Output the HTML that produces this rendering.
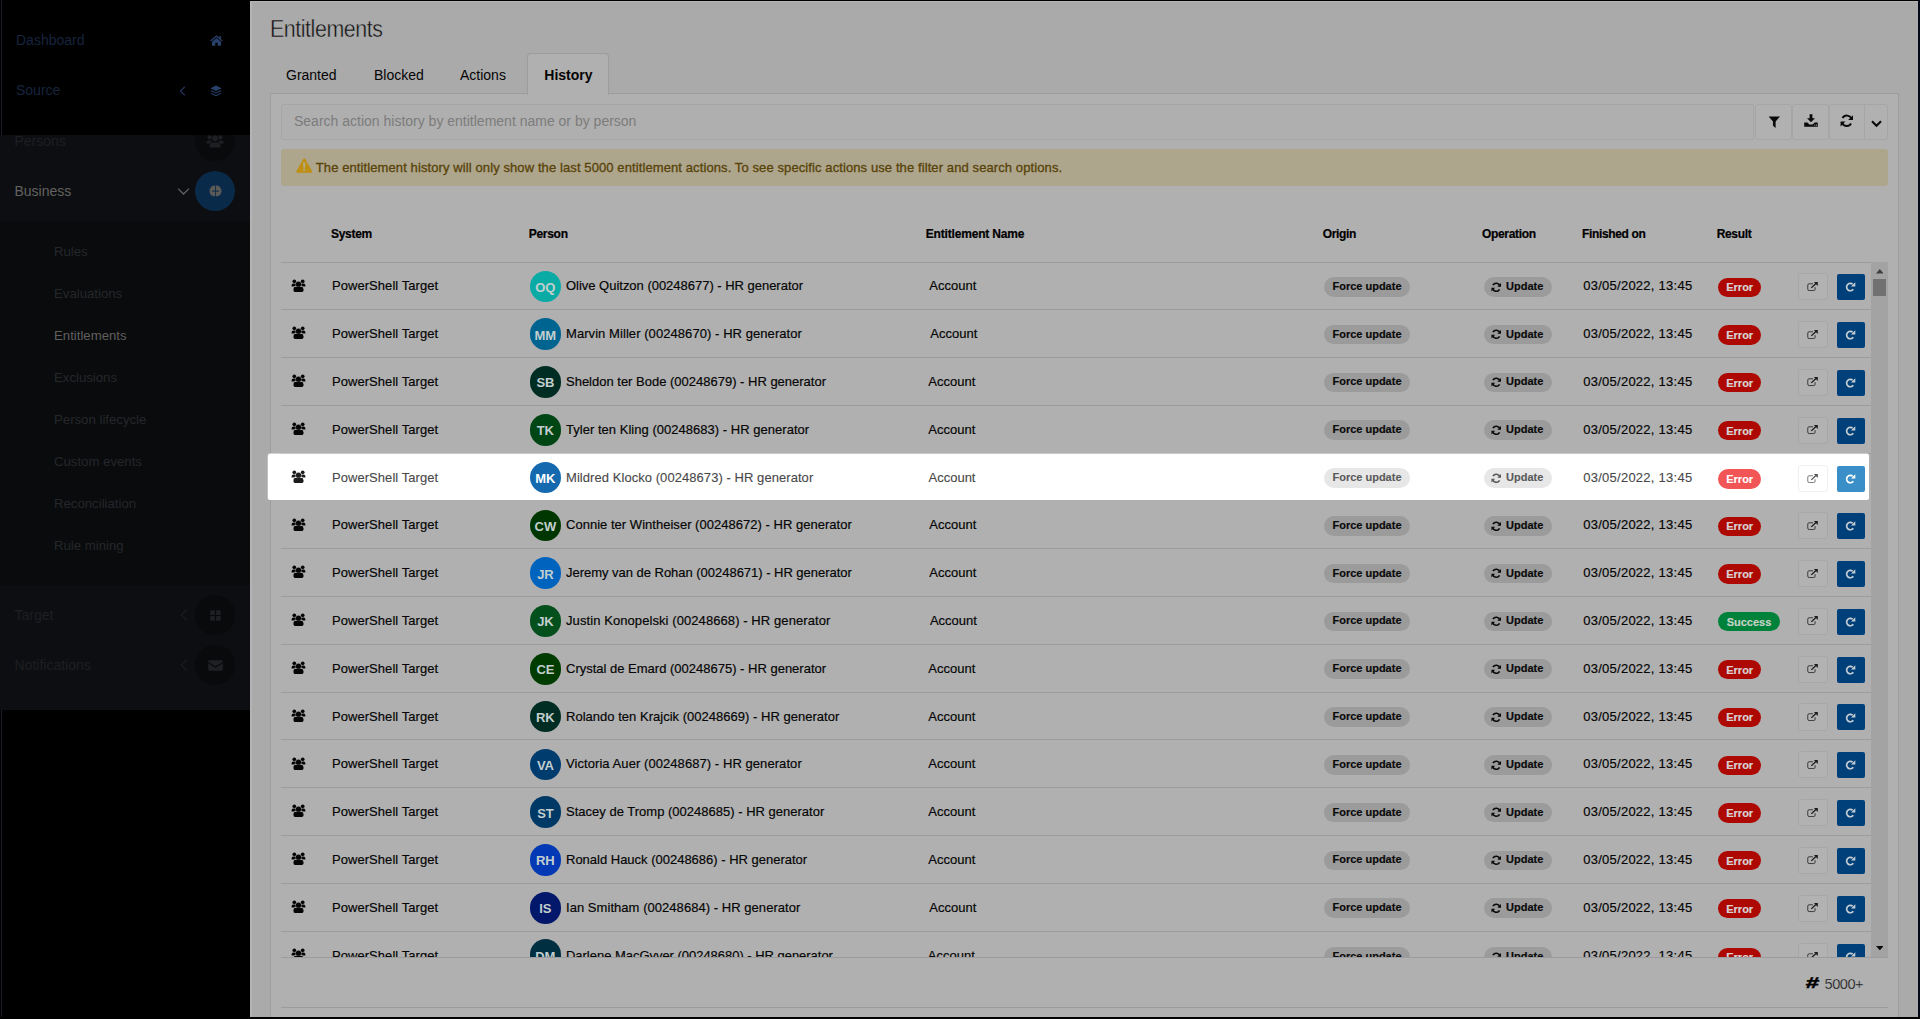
<!DOCTYPE html>
<html lang="en">
<head>
<meta charset="utf-8">
<title>Entitlements</title>
<style>
*{box-sizing:border-box;margin:0;padding:0}
html,body{width:1920px;height:1019px;overflow:hidden;background:#aaaaaa;font-family:"Liberation Sans",Arial,sans-serif;color:#050505}
body{position:relative}
svg{display:block;fill:currentColor}
.abs{position:absolute}
/* ---------- sidebar ---------- */
#side{position:absolute;left:0;top:0;width:250px;height:1019px;background:#000}
#side .blk{position:absolute;left:0;width:250px}
#side .vline{position:absolute;left:1px;width:1px;background:#1b1b2b}
.nav{position:absolute;left:0;width:250px;height:50px;font-size:14px;line-height:50px;white-space:nowrap}
.nav .t{position:absolute;top:0}
.circ{position:absolute;left:195px;width:40px;height:40px;border-radius:50%;top:5px}
.sub{position:absolute;left:54px;font-size:13.2px;line-height:16px;color:#25272b;white-space:nowrap;margin-top:.8px}
/* ---------- main ---------- */
#title{position:absolute;left:270px;top:14px;font-size:23px;line-height:30px;letter-spacing:-.47px;color:#101010;white-space:nowrap;transform:scaleX(.93);transform-origin:0 0;-webkit-text-stroke:.45px #aaaaaa}
.tab{position:absolute;top:53.6px;height:41px;font-size:14px;line-height:42px;white-space:nowrap}
#tabact{position:absolute;left:527px;top:53px;width:82px;height:42px;border:1px solid #9d9d9d;border-bottom:none;border-radius:4px 4px 0 0;background:#b0b0b0}
#panel{position:absolute;left:270px;top:93px;width:1629px;height:940px;border:1px solid #9d9d9d;background:#b0b0b0}
#search{position:absolute;left:281px;top:104px;width:1473px;height:35.5px;border:1px solid #a6a6a6;border-radius:3px 0 0 3px;background:#afafaf;font-size:14px;line-height:33px;padding-left:12px;color:#7c7c7c;white-space:nowrap}
.sbtn{position:absolute;top:104px;height:35.5px;border:1px solid #a6a6a6;border-radius:3px;background:#b1b1b1;color:#0a0a0a}
#alert{position:absolute;left:281px;top:149px;width:1607px;height:36.5px;border-radius:3px;background:#ada58c;color:#584308;font-size:13px;line-height:38px;letter-spacing:.1px;white-space:nowrap}
.th{position:absolute;top:225.7px;font-size:12px;line-height:16px;font-weight:700;color:#000;white-space:nowrap;letter-spacing:-.33px;-webkit-text-stroke:.2px #000}
#tbl{position:absolute;left:281px;top:0;width:1590px;height:957px;overflow:hidden}
.hline{position:absolute;height:1px;background:#9c9c9c}
.row{position:absolute;left:0;width:1590px;height:47.8px;border-bottom:1px solid #9c9c9c;font-size:13px;white-space:nowrap;-webkit-text-stroke:.18px currentColor}
.row>span{position:absolute;top:0;bottom:1px;display:flex;align-items:center}
.c-ico{left:10px}.i-users{width:15px;height:13.6px;margin-top:-.2px}
.c-sys{left:51px;letter-spacing:.05px}
.c-sys,.c-per,.c-ent,.c-fin{padding-top:.9px}

.av{left:248.5px;top:8px!important;bottom:auto!important;width:31.7px;height:31.7px;border-radius:50%;justify-content:center;color:#c3cfcf;font-size:13px}
.av b{font-weight:700;position:relative;top:1px;letter-spacing:-.1px;-webkit-text-stroke:0}
.c-per{left:285px}
.c-ent{left:647.5px}
.bdg{height:19.5px;top:14.5px!important;bottom:auto!important;border-radius:10px;background:#9b9b9b;font-size:11px;font-weight:700;color:#0a0a0a}
.bdg i{font-style:normal;display:block;transform:translateY(-.6px)}
.c-org{left:1043px;width:86px;justify-content:center}
.c-op{left:1202.6px;width:68.4px;padding-left:7px}
.c-op i{font-style:normal;margin-left:5px}
.i-refresh{width:10.5px;height:10.5px}
.c-fin{left:1302.2px;letter-spacing:.26px}
.res{left:1437px;height:19.4px;top:15px!important;bottom:auto!important;border-radius:10px;font-size:11px;font-weight:700;justify-content:center;color:#d9d4d4}
.b-err{width:43.4px;background:#ad0902}
.b-ok{width:62px;background:#00823a;color:#c6d2c8;letter-spacing:0}
.btn-ext{left:1517.4px;width:30px;height:27.2px;top:10.8px!important;bottom:auto!important;border:1px solid #a7a7a7;border-radius:3px;background:#b2b2b2;justify-content:center;color:#1a1a1a}
.i-ext{width:11.2px;height:9.3px;position:relative;top:-.4px;left:-1.3px}
.btn-rep{left:1556px;width:28.2px;height:26px;top:11.8px!important;bottom:auto!important;border-radius:2px;background:#00407a;justify-content:center;color:#c4cdd3}
.i-repeat{width:11px;height:10px;position:relative;top:.1px;left:-.3px}
/* highlighted row */
#hlbox{position:absolute;left:268px;top:454px;width:1601.4px;height:46px;background:#fff;border-radius:2px;box-shadow:0 -1px 0 rgba(255,255,255,.45),-1px 0 0 rgba(255,255,255,.25)}
#hlwrap{position:absolute;left:281px;top:0;width:1590px;height:600px}
.row.hl{border-bottom-color:transparent;color:#484848;-webkit-text-stroke:.1px currentColor}
.row.hl .c-ico{color:#1c1c1c}
.row.hl .av{color:#fff}
.row.hl .bdg{background:#e7e7e7;color:#5a5a5a}
.row.hl .b-err{background:#f25555;color:#fff}
.row.hl .res,.row.hl .btn-ext,.row.hl .btn-rep{margin-top:.7px}
.row.hl .btn-ext{background:#fff;border-color:#efefef;color:#555}
.row.hl .btn-rep{background:#3a8fc8;color:#fff}
.row.last .res,.row.last .btn-ext,.row.last .btn-rep,.row.last .bdg{margin-top:.9px}
.row.last .av{margin-top:-.5px}
/* scrollbar */
#sb{position:absolute;left:1871px;top:262px;width:17px;height:695px;background:#a3a3a3}
#sb .thumb{position:absolute;left:2px;top:17px;width:13px;height:17px;background:#717171}
#sb .up{position:absolute;left:5px;top:7.5px;width:0;height:0;border-left:3.6px solid transparent;border-right:3.6px solid transparent;border-bottom:4.2px solid #454545}
#sb .dn{position:absolute;left:5px;bottom:6.5px;width:0;height:0;border-left:3.6px solid transparent;border-right:3.6px solid transparent;border-top:4.2px solid #101010}
#count{position:absolute;left:1824.6px;top:973.5px;font-size:14.6px;line-height:20px;color:#111;white-space:nowrap;letter-spacing:-.5px;-webkit-text-stroke:.3px #b0b0b0}
#hash{position:absolute;left:1806.4px;top:973.4px;font-size:15.5px;line-height:20px;font-weight:700;color:#000;transform:scaleX(1.5) skewX(-4deg);transform-origin:0 50%;-webkit-text-stroke:.55px #000}
/* frame edges */
.edge{position:absolute;background:#000}
</style>
</head>
<body>
<!-- ================= SIDEBAR ================= -->
<div id="side">
  <div class="blk" style="top:135px;height:86px;background:#0d0e11"></div>
  <div class="blk" style="top:221px;height:364px;background:#0a0b0d"></div>
  <div class="blk" style="top:585px;height:125px;background:#0d0e11"></div>
  <div class="vline" style="top:0;height:135px"></div>
  <div class="vline" style="top:710px;height:309px"></div>

  <div class="nav" style="top:116px;color:#1d1f23"><span class="t" style="left:14.5px">Persons</span>
    <div class="circ" style="background:#090a0c"></div>
    <svg class="abs" style="left:206px;top:18px;width:18px;height:14px;color:#1e1f22" viewBox="0 0 18 14"><circle cx="3.6" cy="3.4" r="2.1"/><circle cx="14.4" cy="3.4" r="2.1"/><circle cx="9" cy="4.2" r="3"/><path d="M0.3 9.5V8.6Q0.3 6.4 2.5 6.4H4.6Q5.2 7.2 6 7.7Q4.4 8.3 4 9.5Z"/><path d="M17.7 9.5V8.6Q17.7 6.4 15.5 6.4H13.4Q12.8 7.2 12 7.7Q13.6 8.3 14 9.5Z"/><path d="M3.6 13.5V11.6Q3.6 8.4 6.6 8.4H11.4Q14.4 8.4 14.4 11.6V13.5Z"/></svg>
  </div>
  <div class="blk" style="top:0;height:135px;background:#000"></div>
  <div class="vline" style="top:0;height:135px"></div>
  <div class="nav" style="top:15px;color:#17243e"><span class="t" style="left:16px">Dashboard</span>
    <svg class="abs" style="left:210px;top:20px;width:13px;height:11px;color:#28406a" viewBox="0 0 13 11"><path d="M6.5 0.3L0.2 5.6L1 6.5L6.5 1.9L12 6.5L12.8 5.6L10.9 4V1H9.4V2.7Z"/><path d="M6.5 3L2 6.8V10.8H5.3V7.8H7.7V10.8H11V6.8Z"/></svg>
  </div>
  <div class="nav" style="top:65px;color:#17243e"><span class="t" style="left:16px">Source</span>
    <svg class="abs" style="left:179px;top:21px;width:7px;height:10px" viewBox="0 0 7 10"><path d="M5.8 0.8L1.4 5L5.8 9.2" fill="none" stroke="#22355a" stroke-width="1.2"/></svg>
    <svg class="abs" style="left:210px;top:20px;width:12px;height:12px;color:#28406a" viewBox="0 0 12 12"><path d="M6 0.5L0.4 3.2L6 5.9L11.6 3.2Z"/><path d="M1.6 5.3L0.4 5.9L6 8.6L11.6 5.9L10.4 5.3L6 7.4Z"/><path d="M1.6 8L0.4 8.6L6 11.3L11.6 8.6L10.4 8L6 10.1Z"/></svg>
  </div>
  <div class="nav" style="top:166px;color:#636260"><span class="t" style="left:14.5px">Business</span>
    <svg class="abs" style="left:177px;top:21px;width:13px;height:9px" viewBox="0 0 13 9"><path d="M1 1.6L6.5 7L12 1.6" fill="none" stroke="#636260" stroke-width="1.3"/></svg>
    <div class="circ" style="background:#0a2a4a"></div>
    <svg class="abs" style="left:208.5px;top:19px;width:13px;height:12px;color:#5b5a58" viewBox="0 0 13 12"><path d="M6.1 0.6Q4.6 0 3.6 1.1Q1.9 1.2 1.6 2.9Q0.2 3.9 0.7 5.6Q0 7.1 1.2 8.4Q1.3 10.3 3.2 10.6Q4.6 12 6.1 11Z"/><path d="M6.9 0.6Q8.4 0 9.4 1.1Q11.1 1.2 11.4 2.9Q12.8 3.9 12.3 5.6Q13 7.1 11.8 8.4Q11.7 10.3 9.8 10.6Q8.4 12 6.9 11Z"/><rect x="3" y="5.6" width="7" height="1" fill="#0a2a4a"/></svg>
  </div>

  <span class="sub" style="top:243px">Rules</span>
  <span class="sub" style="top:285px">Evaluations</span>
  <span class="sub" style="top:327px;color:#605f5d">Entitlements</span>
  <span class="sub" style="top:369px">Exclusions</span>
  <span class="sub" style="top:411px">Person lifecycle</span>
  <span class="sub" style="top:453px">Custom events</span>
  <span class="sub" style="top:495px">Reconciliation</span>
  <span class="sub" style="top:537px">Rule mining</span>

  <div class="nav" style="top:590px;color:#1e1f22"><span class="t" style="left:14.5px">Target</span>
    <svg class="abs" style="left:180px;top:19px;width:8px;height:12px" viewBox="0 0 8 12"><path d="M6.6 0.8L1.4 6L6.6 11.2" fill="none" stroke="#1b1c1f" stroke-width="1.2"/></svg>
    <div class="circ" style="background:#090a0c"></div>
    <svg class="abs" style="left:209.5px;top:19.5px;width:11px;height:11px;color:#1f2023" viewBox="0 0 11 11"><rect x="0.3" y="0.3" width="4.6" height="4.6" rx=".6"/><rect x="6.1" y="0.3" width="4.6" height="4.6" rx=".6"/><rect x="0.3" y="6.1" width="4.6" height="4.6" rx=".6"/><rect x="6.1" y="6.1" width="4.6" height="4.6" rx=".6"/></svg>
  </div>
  <div class="nav" style="top:640px;color:#1e1f22"><span class="t" style="left:14.5px">Notifications</span>
    <svg class="abs" style="left:180px;top:19px;width:8px;height:12px" viewBox="0 0 8 12"><path d="M6.6 0.8L1.4 6L6.6 11.2" fill="none" stroke="#1b1c1f" stroke-width="1.2"/></svg>
    <div class="circ" style="background:#090a0c"></div>
    <svg class="abs" style="left:207.5px;top:19.5px;width:15px;height:11px;color:#1f2023" viewBox="0 0 15 11"><path d="M1.4 0.2H13.6Q14.8 0.2 14.8 1.4V1.9L7.5 6.3L0.2 1.9V1.4Q0.2 0.2 1.4 0.2Z"/><path d="M0.2 3.3L7.5 7.7L14.8 3.3V9.6Q14.8 10.8 13.6 10.8H1.4Q0.2 10.8 0.2 9.6Z"/></svg>
  </div>
</div>

<!-- ================= MAIN ================= -->
<div id="title">Entitlements</div>
<div id="panel"></div>
<div id="tabact"></div>
<span class="tab" style="left:286px">Granted</span>
<span class="tab" style="left:374px">Blocked</span>
<span class="tab" style="left:460px">Actions</span>
<span class="tab" style="left:544.3px;font-weight:700">History</span>

<div id="search">Search action history by entitlement name or by person</div>
<div class="sbtn" style="left:1755px;width:37px">
  <svg class="abs" style="left:11.6px;top:10.8px;width:12.6px;height:12.2px" viewBox="0 0 12 12"><path d="M0.4 0.4H11.6L7.3 5.4V11.8L4.7 9.6V5.4Z"/></svg>
</div>
<div class="sbtn" style="left:1792px;width:37px">
  <svg class="abs" style="left:11px;top:8.8px;width:14px;height:13px" viewBox="0 0 14 13"><path d="M5.6 0.2H8.4V4.2H11L7 8.2L3 4.2H5.6Z"/><path d="M0.2 8.6H3.4L5.4 10.6H8.6L10.6 8.6H13.8V12.8H0.2Z"/><rect x="10.3" y="10.6" width="1" height="1" fill="#b1b1b1"/><rect x="12" y="10.6" width="1" height="1" fill="#b1b1b1"/></svg>
</div>
<div class="sbtn" style="left:1829px;width:58.8px">
  <svg class="abs" style="left:10.2px;top:9.2px;width:13.6px;height:13.6px" viewBox="0 0 14 14"><path d="M11.9 5.2A5.1 5.1 0 0 0 2.6 4.2" fill="none" stroke="currentColor" stroke-width="2"/><path d="M2.1 8.8A5.1 5.1 0 0 0 11.4 9.8" fill="none" stroke="currentColor" stroke-width="2"/><path d="M13.4 1.2V6.2H8.4Z"/><path d="M0.6 12.8V7.8H5.6Z"/></svg>
  <div class="abs" style="left:34.2px;top:0;width:1px;height:33.5px;background:#a6a6a6"></div>
  <svg class="abs" style="left:40.8px;top:15.2px;width:11px;height:8px" viewBox="0 0 11 8"><path d="M1 1.2L5.5 5.7L10 1.2" fill="none" stroke="currentColor" stroke-width="2.1"/></svg>
</div>

<div id="alert">
  <svg class="abs" style="left:14.8px;top:9px;width:16.5px;height:15px" viewBox="0 0 16.5 15"><path d="M8.25 0.4Q8.9 0.4 9.3 1.1L16.1 13.2Q16.6 14.6 15.2 14.7H1.3Q-0.1 14.6 0.4 13.2L7.2 1.1Q7.6 0.4 8.25 0.4Z" fill="#be8f12"/><path d="M7.05 4.6H9.45L9.1 9.8H7.4Z" fill="#b3a988"/><rect x="7.2" y="10.8" width="2.1" height="2" fill="#b3a988"/></svg>
  <span class="abs" style="left:34.8px;top:0;-webkit-text-stroke:.3px currentColor">The entitlement history will only show the last 5000 entitlement actions. To see specific actions use the filter and search options.</span>
</div>

<span class="th" style="left:331px;letter-spacing:-.28px">System</span>
<span class="th" style="left:528.7px;letter-spacing:-.28px">Person</span>
<span class="th" style="left:925.7px;letter-spacing:-.17px">Entitlement Name</span>
<span class="th" style="left:1322.7px">Origin</span>
<span class="th" style="left:1482px">Operation</span>
<span class="th" style="left:1582px;letter-spacing:-.36px">Finished on</span>
<span class="th" style="left:1716.7px">Result</span>

<div class="hline" style="left:281px;top:261.5px;width:1607px"></div>
<div id="tbl">
<div class="row" style="top:262.50px"><span class="c-ico"><svg class="i-users" viewBox="0 0 15 14"><circle cx="3.2" cy="2.3" r="1.9"/><circle cx="11.8" cy="2.3" r="1.9"/><path d="M0.4 7.6V6.4Q0.4 4.6 2.2 4.6H4.4Q4.2 5.6 4.9 6.7Q3.6 7 3.2 7.6Z"/><path d="M14.6 7.6V6.4Q14.6 4.6 12.8 4.6H10.6Q10.8 5.6 10.1 6.7Q11.4 7 11.8 7.6Z"/><circle cx="7.5" cy="5.3" r="2.7"/><path d="M2.4 11.9V10.6Q2.4 8.1 5 8.1H10Q12.6 8.1 12.6 10.6V11.9Q12.6 13.4 11 13.4H4Q2.4 13.4 2.4 11.9Z"/></svg></span><span class="c-sys">PowerShell Target</span><span class="av" style="background:#0aaaa5"><b>OQ</b></span><span class="c-per" style="letter-spacing:-0.019px">Olive Quitzon (00248677) - HR generator</span><span class="c-ent" style="left:648.3px">Account</span><span class="bdg c-org"><i>Force update</i></span><span class="bdg c-op"><svg class="i-refresh" viewBox="0 0 14 14"><path d="M11.9 5.2A5.1 5.1 0 0 0 2.6 4.2" fill="none" stroke="currentColor" stroke-width="2.2"/><path d="M2.1 8.8A5.1 5.1 0 0 0 11.4 9.8" fill="none" stroke="currentColor" stroke-width="2.2"/><path d="M13.4 1.2V6.2H8.4Z"/><path d="M0.6 12.8V7.8H5.6Z"/></svg><i>Update</i></span><span class="c-fin">03/05/2022, 13:45</span><span class="res b-err">Error</span><span class="btn-ext"><svg class="i-ext" viewBox="0 0 12 10"><path d="M6.4 1.9H2.3Q0.8 1.9 0.8 3.4V7.7Q0.8 9.2 2.3 9.2H7.2Q8.7 9.2 8.7 7.7V5.6" fill="none" stroke="currentColor" stroke-width="1.05" opacity=".8"/><path d="M4.6 6.3L9.6 1.6" fill="none" stroke="currentColor" stroke-width="1.4"/><path d="M7.4 0H11.6V4.2Z"/></svg></span><span class="btn-rep"><svg class="i-repeat" viewBox="0 0 11 10"><path d="M8.3 7.3A3.7 3.7 0 1 1 7.7 2.2" fill="none" stroke="currentColor" stroke-width="1.7"/><path d="M10.3 0.3V4.6H6Z"/></svg></span></div>
<div class="row" style="top:310.30px"><span class="c-ico"><svg class="i-users" viewBox="0 0 15 14"><circle cx="3.2" cy="2.3" r="1.9"/><circle cx="11.8" cy="2.3" r="1.9"/><path d="M0.4 7.6V6.4Q0.4 4.6 2.2 4.6H4.4Q4.2 5.6 4.9 6.7Q3.6 7 3.2 7.6Z"/><path d="M14.6 7.6V6.4Q14.6 4.6 12.8 4.6H10.6Q10.8 5.6 10.1 6.7Q11.4 7 11.8 7.6Z"/><circle cx="7.5" cy="5.3" r="2.7"/><path d="M2.4 11.9V10.6Q2.4 8.1 5 8.1H10Q12.6 8.1 12.6 10.6V11.9Q12.6 13.4 11 13.4H4Q2.4 13.4 2.4 11.9Z"/></svg></span><span class="c-sys">PowerShell Target</span><span class="av" style="background:#006491"><b>MM</b></span><span class="c-per" style="letter-spacing:0.067px">Marvin Miller (00248670) - HR generator</span><span class="c-ent" style="left:649.3px">Account</span><span class="bdg c-org"><i>Force update</i></span><span class="bdg c-op"><svg class="i-refresh" viewBox="0 0 14 14"><path d="M11.9 5.2A5.1 5.1 0 0 0 2.6 4.2" fill="none" stroke="currentColor" stroke-width="2.2"/><path d="M2.1 8.8A5.1 5.1 0 0 0 11.4 9.8" fill="none" stroke="currentColor" stroke-width="2.2"/><path d="M13.4 1.2V6.2H8.4Z"/><path d="M0.6 12.8V7.8H5.6Z"/></svg><i>Update</i></span><span class="c-fin">03/05/2022, 13:45</span><span class="res b-err">Error</span><span class="btn-ext"><svg class="i-ext" viewBox="0 0 12 10"><path d="M6.4 1.9H2.3Q0.8 1.9 0.8 3.4V7.7Q0.8 9.2 2.3 9.2H7.2Q8.7 9.2 8.7 7.7V5.6" fill="none" stroke="currentColor" stroke-width="1.05" opacity=".8"/><path d="M4.6 6.3L9.6 1.6" fill="none" stroke="currentColor" stroke-width="1.4"/><path d="M7.4 0H11.6V4.2Z"/></svg></span><span class="btn-rep"><svg class="i-repeat" viewBox="0 0 11 10"><path d="M8.3 7.3A3.7 3.7 0 1 1 7.7 2.2" fill="none" stroke="currentColor" stroke-width="1.7"/><path d="M10.3 0.3V4.6H6Z"/></svg></span></div>
<div class="row" style="top:358.10px"><span class="c-ico"><svg class="i-users" viewBox="0 0 15 14"><circle cx="3.2" cy="2.3" r="1.9"/><circle cx="11.8" cy="2.3" r="1.9"/><path d="M0.4 7.6V6.4Q0.4 4.6 2.2 4.6H4.4Q4.2 5.6 4.9 6.7Q3.6 7 3.2 7.6Z"/><path d="M14.6 7.6V6.4Q14.6 4.6 12.8 4.6H10.6Q10.8 5.6 10.1 6.7Q11.4 7 11.8 7.6Z"/><circle cx="7.5" cy="5.3" r="2.7"/><path d="M2.4 11.9V10.6Q2.4 8.1 5 8.1H10Q12.6 8.1 12.6 10.6V11.9Q12.6 13.4 11 13.4H4Q2.4 13.4 2.4 11.9Z"/></svg></span><span class="c-sys">PowerShell Target</span><span class="av" style="background:#002d23"><b>SB</b></span><span class="c-per" style="letter-spacing:-0.004px">Sheldon ter Bode (00248679) - HR generator</span><span class="c-ent" style="left:647.3px">Account</span><span class="bdg c-org"><i>Force update</i></span><span class="bdg c-op"><svg class="i-refresh" viewBox="0 0 14 14"><path d="M11.9 5.2A5.1 5.1 0 0 0 2.6 4.2" fill="none" stroke="currentColor" stroke-width="2.2"/><path d="M2.1 8.8A5.1 5.1 0 0 0 11.4 9.8" fill="none" stroke="currentColor" stroke-width="2.2"/><path d="M13.4 1.2V6.2H8.4Z"/><path d="M0.6 12.8V7.8H5.6Z"/></svg><i>Update</i></span><span class="c-fin">03/05/2022, 13:45</span><span class="res b-err">Error</span><span class="btn-ext"><svg class="i-ext" viewBox="0 0 12 10"><path d="M6.4 1.9H2.3Q0.8 1.9 0.8 3.4V7.7Q0.8 9.2 2.3 9.2H7.2Q8.7 9.2 8.7 7.7V5.6" fill="none" stroke="currentColor" stroke-width="1.05" opacity=".8"/><path d="M4.6 6.3L9.6 1.6" fill="none" stroke="currentColor" stroke-width="1.4"/><path d="M7.4 0H11.6V4.2Z"/></svg></span><span class="btn-rep"><svg class="i-repeat" viewBox="0 0 11 10"><path d="M8.3 7.3A3.7 3.7 0 1 1 7.7 2.2" fill="none" stroke="currentColor" stroke-width="1.7"/><path d="M10.3 0.3V4.6H6Z"/></svg></span></div>
<div class="row" style="top:405.90px"><span class="c-ico"><svg class="i-users" viewBox="0 0 15 14"><circle cx="3.2" cy="2.3" r="1.9"/><circle cx="11.8" cy="2.3" r="1.9"/><path d="M0.4 7.6V6.4Q0.4 4.6 2.2 4.6H4.4Q4.2 5.6 4.9 6.7Q3.6 7 3.2 7.6Z"/><path d="M14.6 7.6V6.4Q14.6 4.6 12.8 4.6H10.6Q10.8 5.6 10.1 6.7Q11.4 7 11.8 7.6Z"/><circle cx="7.5" cy="5.3" r="2.7"/><path d="M2.4 11.9V10.6Q2.4 8.1 5 8.1H10Q12.6 8.1 12.6 10.6V11.9Q12.6 13.4 11 13.4H4Q2.4 13.4 2.4 11.9Z"/></svg></span><span class="c-sys">PowerShell Target</span><span class="av" style="background:#004614"><b>TK</b></span><span class="c-per" style="letter-spacing:0.027px">Tyler ten Kling (00248683) - HR generator</span><span class="c-ent" style="left:647.3px">Account</span><span class="bdg c-org"><i>Force update</i></span><span class="bdg c-op"><svg class="i-refresh" viewBox="0 0 14 14"><path d="M11.9 5.2A5.1 5.1 0 0 0 2.6 4.2" fill="none" stroke="currentColor" stroke-width="2.2"/><path d="M2.1 8.8A5.1 5.1 0 0 0 11.4 9.8" fill="none" stroke="currentColor" stroke-width="2.2"/><path d="M13.4 1.2V6.2H8.4Z"/><path d="M0.6 12.8V7.8H5.6Z"/></svg><i>Update</i></span><span class="c-fin">03/05/2022, 13:45</span><span class="res b-err">Error</span><span class="btn-ext"><svg class="i-ext" viewBox="0 0 12 10"><path d="M6.4 1.9H2.3Q0.8 1.9 0.8 3.4V7.7Q0.8 9.2 2.3 9.2H7.2Q8.7 9.2 8.7 7.7V5.6" fill="none" stroke="currentColor" stroke-width="1.05" opacity=".8"/><path d="M4.6 6.3L9.6 1.6" fill="none" stroke="currentColor" stroke-width="1.4"/><path d="M7.4 0H11.6V4.2Z"/></svg></span><span class="btn-rep"><svg class="i-repeat" viewBox="0 0 11 10"><path d="M8.3 7.3A3.7 3.7 0 1 1 7.7 2.2" fill="none" stroke="currentColor" stroke-width="1.7"/><path d="M10.3 0.3V4.6H6Z"/></svg></span></div>
<div class="row" style="top:501.50px"><span class="c-ico"><svg class="i-users" viewBox="0 0 15 14"><circle cx="3.2" cy="2.3" r="1.9"/><circle cx="11.8" cy="2.3" r="1.9"/><path d="M0.4 7.6V6.4Q0.4 4.6 2.2 4.6H4.4Q4.2 5.6 4.9 6.7Q3.6 7 3.2 7.6Z"/><path d="M14.6 7.6V6.4Q14.6 4.6 12.8 4.6H10.6Q10.8 5.6 10.1 6.7Q11.4 7 11.8 7.6Z"/><circle cx="7.5" cy="5.3" r="2.7"/><path d="M2.4 11.9V10.6Q2.4 8.1 5 8.1H10Q12.6 8.1 12.6 10.6V11.9Q12.6 13.4 11 13.4H4Q2.4 13.4 2.4 11.9Z"/></svg></span><span class="c-sys">PowerShell Target</span><span class="av" style="background:#003700"><b>CW</b></span><span class="c-per" style="letter-spacing:0.023px">Connie ter Wintheiser (00248672) - HR generator</span><span class="c-ent" style="left:648.3px">Account</span><span class="bdg c-org"><i>Force update</i></span><span class="bdg c-op"><svg class="i-refresh" viewBox="0 0 14 14"><path d="M11.9 5.2A5.1 5.1 0 0 0 2.6 4.2" fill="none" stroke="currentColor" stroke-width="2.2"/><path d="M2.1 8.8A5.1 5.1 0 0 0 11.4 9.8" fill="none" stroke="currentColor" stroke-width="2.2"/><path d="M13.4 1.2V6.2H8.4Z"/><path d="M0.6 12.8V7.8H5.6Z"/></svg><i>Update</i></span><span class="c-fin">03/05/2022, 13:45</span><span class="res b-err">Error</span><span class="btn-ext"><svg class="i-ext" viewBox="0 0 12 10"><path d="M6.4 1.9H2.3Q0.8 1.9 0.8 3.4V7.7Q0.8 9.2 2.3 9.2H7.2Q8.7 9.2 8.7 7.7V5.6" fill="none" stroke="currentColor" stroke-width="1.05" opacity=".8"/><path d="M4.6 6.3L9.6 1.6" fill="none" stroke="currentColor" stroke-width="1.4"/><path d="M7.4 0H11.6V4.2Z"/></svg></span><span class="btn-rep"><svg class="i-repeat" viewBox="0 0 11 10"><path d="M8.3 7.3A3.7 3.7 0 1 1 7.7 2.2" fill="none" stroke="currentColor" stroke-width="1.7"/><path d="M10.3 0.3V4.6H6Z"/></svg></span></div>
<div class="row" style="top:549.30px"><span class="c-ico"><svg class="i-users" viewBox="0 0 15 14"><circle cx="3.2" cy="2.3" r="1.9"/><circle cx="11.8" cy="2.3" r="1.9"/><path d="M0.4 7.6V6.4Q0.4 4.6 2.2 4.6H4.4Q4.2 5.6 4.9 6.7Q3.6 7 3.2 7.6Z"/><path d="M14.6 7.6V6.4Q14.6 4.6 12.8 4.6H10.6Q10.8 5.6 10.1 6.7Q11.4 7 11.8 7.6Z"/><circle cx="7.5" cy="5.3" r="2.7"/><path d="M2.4 11.9V10.6Q2.4 8.1 5 8.1H10Q12.6 8.1 12.6 10.6V11.9Q12.6 13.4 11 13.4H4Q2.4 13.4 2.4 11.9Z"/></svg></span><span class="c-sys">PowerShell Target</span><span class="av" style="background:#0064be"><b>JR</b></span><span class="c-per" style="letter-spacing:-0.024px">Jeremy van de Rohan (00248671) - HR generator</span><span class="c-ent" style="left:648.3px">Account</span><span class="bdg c-org"><i>Force update</i></span><span class="bdg c-op"><svg class="i-refresh" viewBox="0 0 14 14"><path d="M11.9 5.2A5.1 5.1 0 0 0 2.6 4.2" fill="none" stroke="currentColor" stroke-width="2.2"/><path d="M2.1 8.8A5.1 5.1 0 0 0 11.4 9.8" fill="none" stroke="currentColor" stroke-width="2.2"/><path d="M13.4 1.2V6.2H8.4Z"/><path d="M0.6 12.8V7.8H5.6Z"/></svg><i>Update</i></span><span class="c-fin">03/05/2022, 13:45</span><span class="res b-err">Error</span><span class="btn-ext"><svg class="i-ext" viewBox="0 0 12 10"><path d="M6.4 1.9H2.3Q0.8 1.9 0.8 3.4V7.7Q0.8 9.2 2.3 9.2H7.2Q8.7 9.2 8.7 7.7V5.6" fill="none" stroke="currentColor" stroke-width="1.05" opacity=".8"/><path d="M4.6 6.3L9.6 1.6" fill="none" stroke="currentColor" stroke-width="1.4"/><path d="M7.4 0H11.6V4.2Z"/></svg></span><span class="btn-rep"><svg class="i-repeat" viewBox="0 0 11 10"><path d="M8.3 7.3A3.7 3.7 0 1 1 7.7 2.2" fill="none" stroke="currentColor" stroke-width="1.7"/><path d="M10.3 0.3V4.6H6Z"/></svg></span></div>
<div class="row" style="top:597.10px"><span class="c-ico"><svg class="i-users" viewBox="0 0 15 14"><circle cx="3.2" cy="2.3" r="1.9"/><circle cx="11.8" cy="2.3" r="1.9"/><path d="M0.4 7.6V6.4Q0.4 4.6 2.2 4.6H4.4Q4.2 5.6 4.9 6.7Q3.6 7 3.2 7.6Z"/><path d="M14.6 7.6V6.4Q14.6 4.6 12.8 4.6H10.6Q10.8 5.6 10.1 6.7Q11.4 7 11.8 7.6Z"/><circle cx="7.5" cy="5.3" r="2.7"/><path d="M2.4 11.9V10.6Q2.4 8.1 5 8.1H10Q12.6 8.1 12.6 10.6V11.9Q12.6 13.4 11 13.4H4Q2.4 13.4 2.4 11.9Z"/></svg></span><span class="c-sys">PowerShell Target</span><span class="av" style="background:#04501c"><b>JK</b></span><span class="c-per" style="letter-spacing:0.082px">Justin Konopelski (00248668) - HR generator</span><span class="c-ent" style="left:648.9px">Account</span><span class="bdg c-org"><i>Force update</i></span><span class="bdg c-op"><svg class="i-refresh" viewBox="0 0 14 14"><path d="M11.9 5.2A5.1 5.1 0 0 0 2.6 4.2" fill="none" stroke="currentColor" stroke-width="2.2"/><path d="M2.1 8.8A5.1 5.1 0 0 0 11.4 9.8" fill="none" stroke="currentColor" stroke-width="2.2"/><path d="M13.4 1.2V6.2H8.4Z"/><path d="M0.6 12.8V7.8H5.6Z"/></svg><i>Update</i></span><span class="c-fin">03/05/2022, 13:45</span><span class="res b-ok">Success</span><span class="btn-ext"><svg class="i-ext" viewBox="0 0 12 10"><path d="M6.4 1.9H2.3Q0.8 1.9 0.8 3.4V7.7Q0.8 9.2 2.3 9.2H7.2Q8.7 9.2 8.7 7.7V5.6" fill="none" stroke="currentColor" stroke-width="1.05" opacity=".8"/><path d="M4.6 6.3L9.6 1.6" fill="none" stroke="currentColor" stroke-width="1.4"/><path d="M7.4 0H11.6V4.2Z"/></svg></span><span class="btn-rep"><svg class="i-repeat" viewBox="0 0 11 10"><path d="M8.3 7.3A3.7 3.7 0 1 1 7.7 2.2" fill="none" stroke="currentColor" stroke-width="1.7"/><path d="M10.3 0.3V4.6H6Z"/></svg></span></div>
<div class="row" style="top:644.90px"><span class="c-ico"><svg class="i-users" viewBox="0 0 15 14"><circle cx="3.2" cy="2.3" r="1.9"/><circle cx="11.8" cy="2.3" r="1.9"/><path d="M0.4 7.6V6.4Q0.4 4.6 2.2 4.6H4.4Q4.2 5.6 4.9 6.7Q3.6 7 3.2 7.6Z"/><path d="M14.6 7.6V6.4Q14.6 4.6 12.8 4.6H10.6Q10.8 5.6 10.1 6.7Q11.4 7 11.8 7.6Z"/><circle cx="7.5" cy="5.3" r="2.7"/><path d="M2.4 11.9V10.6Q2.4 8.1 5 8.1H10Q12.6 8.1 12.6 10.6V11.9Q12.6 13.4 11 13.4H4Q2.4 13.4 2.4 11.9Z"/></svg></span><span class="c-sys">PowerShell Target</span><span class="av" style="background:#003c00"><b>CE</b></span><span class="c-per" style="letter-spacing:-0.001px">Crystal de Emard (00248675) - HR generator</span><span class="c-ent" style="left:647.3px">Account</span><span class="bdg c-org"><i>Force update</i></span><span class="bdg c-op"><svg class="i-refresh" viewBox="0 0 14 14"><path d="M11.9 5.2A5.1 5.1 0 0 0 2.6 4.2" fill="none" stroke="currentColor" stroke-width="2.2"/><path d="M2.1 8.8A5.1 5.1 0 0 0 11.4 9.8" fill="none" stroke="currentColor" stroke-width="2.2"/><path d="M13.4 1.2V6.2H8.4Z"/><path d="M0.6 12.8V7.8H5.6Z"/></svg><i>Update</i></span><span class="c-fin">03/05/2022, 13:45</span><span class="res b-err">Error</span><span class="btn-ext"><svg class="i-ext" viewBox="0 0 12 10"><path d="M6.4 1.9H2.3Q0.8 1.9 0.8 3.4V7.7Q0.8 9.2 2.3 9.2H7.2Q8.7 9.2 8.7 7.7V5.6" fill="none" stroke="currentColor" stroke-width="1.05" opacity=".8"/><path d="M4.6 6.3L9.6 1.6" fill="none" stroke="currentColor" stroke-width="1.4"/><path d="M7.4 0H11.6V4.2Z"/></svg></span><span class="btn-rep"><svg class="i-repeat" viewBox="0 0 11 10"><path d="M8.3 7.3A3.7 3.7 0 1 1 7.7 2.2" fill="none" stroke="currentColor" stroke-width="1.7"/><path d="M10.3 0.3V4.6H6Z"/></svg></span></div>
<div class="row" style="top:692.70px"><span class="c-ico"><svg class="i-users" viewBox="0 0 15 14"><circle cx="3.2" cy="2.3" r="1.9"/><circle cx="11.8" cy="2.3" r="1.9"/><path d="M0.4 7.6V6.4Q0.4 4.6 2.2 4.6H4.4Q4.2 5.6 4.9 6.7Q3.6 7 3.2 7.6Z"/><path d="M14.6 7.6V6.4Q14.6 4.6 12.8 4.6H10.6Q10.8 5.6 10.1 6.7Q11.4 7 11.8 7.6Z"/><circle cx="7.5" cy="5.3" r="2.7"/><path d="M2.4 11.9V10.6Q2.4 8.1 5 8.1H10Q12.6 8.1 12.6 10.6V11.9Q12.6 13.4 11 13.4H4Q2.4 13.4 2.4 11.9Z"/></svg></span><span class="c-sys">PowerShell Target</span><span class="av" style="background:#002d23"><b>RK</b></span><span class="c-per" style="letter-spacing:0.019px">Rolando ten Krajcik (00248669) - HR generator</span><span class="c-ent" style="left:647.3px">Account</span><span class="bdg c-org"><i>Force update</i></span><span class="bdg c-op"><svg class="i-refresh" viewBox="0 0 14 14"><path d="M11.9 5.2A5.1 5.1 0 0 0 2.6 4.2" fill="none" stroke="currentColor" stroke-width="2.2"/><path d="M2.1 8.8A5.1 5.1 0 0 0 11.4 9.8" fill="none" stroke="currentColor" stroke-width="2.2"/><path d="M13.4 1.2V6.2H8.4Z"/><path d="M0.6 12.8V7.8H5.6Z"/></svg><i>Update</i></span><span class="c-fin">03/05/2022, 13:45</span><span class="res b-err">Error</span><span class="btn-ext"><svg class="i-ext" viewBox="0 0 12 10"><path d="M6.4 1.9H2.3Q0.8 1.9 0.8 3.4V7.7Q0.8 9.2 2.3 9.2H7.2Q8.7 9.2 8.7 7.7V5.6" fill="none" stroke="currentColor" stroke-width="1.05" opacity=".8"/><path d="M4.6 6.3L9.6 1.6" fill="none" stroke="currentColor" stroke-width="1.4"/><path d="M7.4 0H11.6V4.2Z"/></svg></span><span class="btn-rep"><svg class="i-repeat" viewBox="0 0 11 10"><path d="M8.3 7.3A3.7 3.7 0 1 1 7.7 2.2" fill="none" stroke="currentColor" stroke-width="1.7"/><path d="M10.3 0.3V4.6H6Z"/></svg></span></div>
<div class="row" style="top:740.50px"><span class="c-ico"><svg class="i-users" viewBox="0 0 15 14"><circle cx="3.2" cy="2.3" r="1.9"/><circle cx="11.8" cy="2.3" r="1.9"/><path d="M0.4 7.6V6.4Q0.4 4.6 2.2 4.6H4.4Q4.2 5.6 4.9 6.7Q3.6 7 3.2 7.6Z"/><path d="M14.6 7.6V6.4Q14.6 4.6 12.8 4.6H10.6Q10.8 5.6 10.1 6.7Q11.4 7 11.8 7.6Z"/><circle cx="7.5" cy="5.3" r="2.7"/><path d="M2.4 11.9V10.6Q2.4 8.1 5 8.1H10Q12.6 8.1 12.6 10.6V11.9Q12.6 13.4 11 13.4H4Q2.4 13.4 2.4 11.9Z"/></svg></span><span class="c-sys">PowerShell Target</span><span class="av" style="background:#003c6e"><b>VA</b></span><span class="c-per" style="letter-spacing:0.067px">Victoria Auer (00248687) - HR generator</span><span class="c-ent" style="left:647.3px">Account</span><span class="bdg c-org"><i>Force update</i></span><span class="bdg c-op"><svg class="i-refresh" viewBox="0 0 14 14"><path d="M11.9 5.2A5.1 5.1 0 0 0 2.6 4.2" fill="none" stroke="currentColor" stroke-width="2.2"/><path d="M2.1 8.8A5.1 5.1 0 0 0 11.4 9.8" fill="none" stroke="currentColor" stroke-width="2.2"/><path d="M13.4 1.2V6.2H8.4Z"/><path d="M0.6 12.8V7.8H5.6Z"/></svg><i>Update</i></span><span class="c-fin">03/05/2022, 13:45</span><span class="res b-err">Error</span><span class="btn-ext"><svg class="i-ext" viewBox="0 0 12 10"><path d="M6.4 1.9H2.3Q0.8 1.9 0.8 3.4V7.7Q0.8 9.2 2.3 9.2H7.2Q8.7 9.2 8.7 7.7V5.6" fill="none" stroke="currentColor" stroke-width="1.05" opacity=".8"/><path d="M4.6 6.3L9.6 1.6" fill="none" stroke="currentColor" stroke-width="1.4"/><path d="M7.4 0H11.6V4.2Z"/></svg></span><span class="btn-rep"><svg class="i-repeat" viewBox="0 0 11 10"><path d="M8.3 7.3A3.7 3.7 0 1 1 7.7 2.2" fill="none" stroke="currentColor" stroke-width="1.7"/><path d="M10.3 0.3V4.6H6Z"/></svg></span></div>
<div class="row" style="top:788.30px"><span class="c-ico"><svg class="i-users" viewBox="0 0 15 14"><circle cx="3.2" cy="2.3" r="1.9"/><circle cx="11.8" cy="2.3" r="1.9"/><path d="M0.4 7.6V6.4Q0.4 4.6 2.2 4.6H4.4Q4.2 5.6 4.9 6.7Q3.6 7 3.2 7.6Z"/><path d="M14.6 7.6V6.4Q14.6 4.6 12.8 4.6H10.6Q10.8 5.6 10.1 6.7Q11.4 7 11.8 7.6Z"/><circle cx="7.5" cy="5.3" r="2.7"/><path d="M2.4 11.9V10.6Q2.4 8.1 5 8.1H10Q12.6 8.1 12.6 10.6V11.9Q12.6 13.4 11 13.4H4Q2.4 13.4 2.4 11.9Z"/></svg></span><span class="c-sys">PowerShell Target</span><span class="av" style="background:#003866"><b>ST</b></span><span class="c-per" style="letter-spacing:0.008px">Stacey de Tromp (00248685) - HR generator</span><span class="c-ent" style="left:647.3px">Account</span><span class="bdg c-org"><i>Force update</i></span><span class="bdg c-op"><svg class="i-refresh" viewBox="0 0 14 14"><path d="M11.9 5.2A5.1 5.1 0 0 0 2.6 4.2" fill="none" stroke="currentColor" stroke-width="2.2"/><path d="M2.1 8.8A5.1 5.1 0 0 0 11.4 9.8" fill="none" stroke="currentColor" stroke-width="2.2"/><path d="M13.4 1.2V6.2H8.4Z"/><path d="M0.6 12.8V7.8H5.6Z"/></svg><i>Update</i></span><span class="c-fin">03/05/2022, 13:45</span><span class="res b-err">Error</span><span class="btn-ext"><svg class="i-ext" viewBox="0 0 12 10"><path d="M6.4 1.9H2.3Q0.8 1.9 0.8 3.4V7.7Q0.8 9.2 2.3 9.2H7.2Q8.7 9.2 8.7 7.7V5.6" fill="none" stroke="currentColor" stroke-width="1.05" opacity=".8"/><path d="M4.6 6.3L9.6 1.6" fill="none" stroke="currentColor" stroke-width="1.4"/><path d="M7.4 0H11.6V4.2Z"/></svg></span><span class="btn-rep"><svg class="i-repeat" viewBox="0 0 11 10"><path d="M8.3 7.3A3.7 3.7 0 1 1 7.7 2.2" fill="none" stroke="currentColor" stroke-width="1.7"/><path d="M10.3 0.3V4.6H6Z"/></svg></span></div>
<div class="row" style="top:836.10px"><span class="c-ico"><svg class="i-users" viewBox="0 0 15 14"><circle cx="3.2" cy="2.3" r="1.9"/><circle cx="11.8" cy="2.3" r="1.9"/><path d="M0.4 7.6V6.4Q0.4 4.6 2.2 4.6H4.4Q4.2 5.6 4.9 6.7Q3.6 7 3.2 7.6Z"/><path d="M14.6 7.6V6.4Q14.6 4.6 12.8 4.6H10.6Q10.8 5.6 10.1 6.7Q11.4 7 11.8 7.6Z"/><circle cx="7.5" cy="5.3" r="2.7"/><path d="M2.4 11.9V10.6Q2.4 8.1 5 8.1H10Q12.6 8.1 12.6 10.6V11.9Q12.6 13.4 11 13.4H4Q2.4 13.4 2.4 11.9Z"/></svg></span><span class="c-sys">PowerShell Target</span><span class="av" style="background:#0439b6"><b>RH</b></span><span class="c-per" style="letter-spacing:-0.007px">Ronald Hauck (00248686) - HR generator</span><span class="c-ent" style="left:647.3px">Account</span><span class="bdg c-org"><i>Force update</i></span><span class="bdg c-op"><svg class="i-refresh" viewBox="0 0 14 14"><path d="M11.9 5.2A5.1 5.1 0 0 0 2.6 4.2" fill="none" stroke="currentColor" stroke-width="2.2"/><path d="M2.1 8.8A5.1 5.1 0 0 0 11.4 9.8" fill="none" stroke="currentColor" stroke-width="2.2"/><path d="M13.4 1.2V6.2H8.4Z"/><path d="M0.6 12.8V7.8H5.6Z"/></svg><i>Update</i></span><span class="c-fin">03/05/2022, 13:45</span><span class="res b-err">Error</span><span class="btn-ext"><svg class="i-ext" viewBox="0 0 12 10"><path d="M6.4 1.9H2.3Q0.8 1.9 0.8 3.4V7.7Q0.8 9.2 2.3 9.2H7.2Q8.7 9.2 8.7 7.7V5.6" fill="none" stroke="currentColor" stroke-width="1.05" opacity=".8"/><path d="M4.6 6.3L9.6 1.6" fill="none" stroke="currentColor" stroke-width="1.4"/><path d="M7.4 0H11.6V4.2Z"/></svg></span><span class="btn-rep"><svg class="i-repeat" viewBox="0 0 11 10"><path d="M8.3 7.3A3.7 3.7 0 1 1 7.7 2.2" fill="none" stroke="currentColor" stroke-width="1.7"/><path d="M10.3 0.3V4.6H6Z"/></svg></span></div>
<div class="row" style="top:883.90px"><span class="c-ico"><svg class="i-users" viewBox="0 0 15 14"><circle cx="3.2" cy="2.3" r="1.9"/><circle cx="11.8" cy="2.3" r="1.9"/><path d="M0.4 7.6V6.4Q0.4 4.6 2.2 4.6H4.4Q4.2 5.6 4.9 6.7Q3.6 7 3.2 7.6Z"/><path d="M14.6 7.6V6.4Q14.6 4.6 12.8 4.6H10.6Q10.8 5.6 10.1 6.7Q11.4 7 11.8 7.6Z"/><circle cx="7.5" cy="5.3" r="2.7"/><path d="M2.4 11.9V10.6Q2.4 8.1 5 8.1H10Q12.6 8.1 12.6 10.6V11.9Q12.6 13.4 11 13.4H4Q2.4 13.4 2.4 11.9Z"/></svg></span><span class="c-sys">PowerShell Target</span><span class="av" style="background:#03186a"><b>IS</b></span><span class="c-per" style="letter-spacing:0.046px">Ian Smitham (00248684) - HR generator</span><span class="c-ent" style="left:648.3px">Account</span><span class="bdg c-org"><i>Force update</i></span><span class="bdg c-op"><svg class="i-refresh" viewBox="0 0 14 14"><path d="M11.9 5.2A5.1 5.1 0 0 0 2.6 4.2" fill="none" stroke="currentColor" stroke-width="2.2"/><path d="M2.1 8.8A5.1 5.1 0 0 0 11.4 9.8" fill="none" stroke="currentColor" stroke-width="2.2"/><path d="M13.4 1.2V6.2H8.4Z"/><path d="M0.6 12.8V7.8H5.6Z"/></svg><i>Update</i></span><span class="c-fin">03/05/2022, 13:45</span><span class="res b-err">Error</span><span class="btn-ext"><svg class="i-ext" viewBox="0 0 12 10"><path d="M6.4 1.9H2.3Q0.8 1.9 0.8 3.4V7.7Q0.8 9.2 2.3 9.2H7.2Q8.7 9.2 8.7 7.7V5.6" fill="none" stroke="currentColor" stroke-width="1.05" opacity=".8"/><path d="M4.6 6.3L9.6 1.6" fill="none" stroke="currentColor" stroke-width="1.4"/><path d="M7.4 0H11.6V4.2Z"/></svg></span><span class="btn-rep"><svg class="i-repeat" viewBox="0 0 11 10"><path d="M8.3 7.3A3.7 3.7 0 1 1 7.7 2.2" fill="none" stroke="currentColor" stroke-width="1.7"/><path d="M10.3 0.3V4.6H6Z"/></svg></span></div>
<div class="row last" style="top:931.70px"><span class="c-ico"><svg class="i-users" viewBox="0 0 15 14"><circle cx="3.2" cy="2.3" r="1.9"/><circle cx="11.8" cy="2.3" r="1.9"/><path d="M0.4 7.6V6.4Q0.4 4.6 2.2 4.6H4.4Q4.2 5.6 4.9 6.7Q3.6 7 3.2 7.6Z"/><path d="M14.6 7.6V6.4Q14.6 4.6 12.8 4.6H10.6Q10.8 5.6 10.1 6.7Q11.4 7 11.8 7.6Z"/><circle cx="7.5" cy="5.3" r="2.7"/><path d="M2.4 11.9V10.6Q2.4 8.1 5 8.1H10Q12.6 8.1 12.6 10.6V11.9Q12.6 13.4 11 13.4H4Q2.4 13.4 2.4 11.9Z"/></svg></span><span class="c-sys">PowerShell Target</span><span class="av" style="background:#002f41"><b>DM</b></span><span class="c-per" style="letter-spacing:-0.028px">Darlene MacGyver (00248680) - HR generator</span><span class="c-ent" style="left:646.8px">Account</span><span class="bdg c-org"><i>Force update</i></span><span class="bdg c-op"><svg class="i-refresh" viewBox="0 0 14 14"><path d="M11.9 5.2A5.1 5.1 0 0 0 2.6 4.2" fill="none" stroke="currentColor" stroke-width="2.2"/><path d="M2.1 8.8A5.1 5.1 0 0 0 11.4 9.8" fill="none" stroke="currentColor" stroke-width="2.2"/><path d="M13.4 1.2V6.2H8.4Z"/><path d="M0.6 12.8V7.8H5.6Z"/></svg><i>Update</i></span><span class="c-fin">03/05/2022, 13:45</span><span class="res b-err">Error</span><span class="btn-ext"><svg class="i-ext" viewBox="0 0 12 10"><path d="M6.4 1.9H2.3Q0.8 1.9 0.8 3.4V7.7Q0.8 9.2 2.3 9.2H7.2Q8.7 9.2 8.7 7.7V5.6" fill="none" stroke="currentColor" stroke-width="1.05" opacity=".8"/><path d="M4.6 6.3L9.6 1.6" fill="none" stroke="currentColor" stroke-width="1.4"/><path d="M7.4 0H11.6V4.2Z"/></svg></span><span class="btn-rep"><svg class="i-repeat" viewBox="0 0 11 10"><path d="M8.3 7.3A3.7 3.7 0 1 1 7.7 2.2" fill="none" stroke="currentColor" stroke-width="1.7"/><path d="M10.3 0.3V4.6H6Z"/></svg></span></div>

</div>
<div id="sb"><svg class="abs" style="left:4.8px;top:7.3px;width:7.6px;height:4.4px" viewBox="0 0 7.6 4.4"><path d="M0 4.4L3.8 0L7.6 4.4Z" fill="#3f3f3f"/></svg><div class="thumb"></div><svg class="abs" style="left:4.8px;top:684px;width:7.6px;height:4.4px" viewBox="0 0 7.6 4.4"><path d="M0 0L3.8 4.4L7.6 0Z" fill="#0c0c0c"/></svg></div>
<div class="hline" style="left:281px;top:956.5px;width:1607px"></div>

<div id="hlbox"></div>
<div id="hlwrap">
<div class="row hl" style="top:453.70px"><span class="c-ico"><svg class="i-users" viewBox="0 0 15 14"><circle cx="3.2" cy="2.3" r="1.9"/><circle cx="11.8" cy="2.3" r="1.9"/><path d="M0.4 7.6V6.4Q0.4 4.6 2.2 4.6H4.4Q4.2 5.6 4.9 6.7Q3.6 7 3.2 7.6Z"/><path d="M14.6 7.6V6.4Q14.6 4.6 12.8 4.6H10.6Q10.8 5.6 10.1 6.7Q11.4 7 11.8 7.6Z"/><circle cx="7.5" cy="5.3" r="2.7"/><path d="M2.4 11.9V10.6Q2.4 8.1 5 8.1H10Q12.6 8.1 12.6 10.6V11.9Q12.6 13.4 11 13.4H4Q2.4 13.4 2.4 11.9Z"/></svg></span><span class="c-sys">PowerShell Target</span><span class="av" style="background:#1469af"><b>MK</b></span><span class="c-per" style="letter-spacing:0.058px">Mildred Klocko (00248673) - HR generator</span><span class="c-ent" style="left:647.5px">Account</span><span class="bdg c-org"><i>Force update</i></span><span class="bdg c-op"><svg class="i-refresh" viewBox="0 0 14 14"><path d="M11.9 5.2A5.1 5.1 0 0 0 2.6 4.2" fill="none" stroke="currentColor" stroke-width="2.2"/><path d="M2.1 8.8A5.1 5.1 0 0 0 11.4 9.8" fill="none" stroke="currentColor" stroke-width="2.2"/><path d="M13.4 1.2V6.2H8.4Z"/><path d="M0.6 12.8V7.8H5.6Z"/></svg><i>Update</i></span><span class="c-fin">03/05/2022, 13:45</span><span class="res b-err">Error</span><span class="btn-ext"><svg class="i-ext" viewBox="0 0 12 10"><path d="M6.4 1.9H2.3Q0.8 1.9 0.8 3.4V7.7Q0.8 9.2 2.3 9.2H7.2Q8.7 9.2 8.7 7.7V5.6" fill="none" stroke="currentColor" stroke-width="1.05" opacity=".8"/><path d="M4.6 6.3L9.6 1.6" fill="none" stroke="currentColor" stroke-width="1.4"/><path d="M7.4 0H11.6V4.2Z"/></svg></span><span class="btn-rep"><svg class="i-repeat" viewBox="0 0 11 10"><path d="M8.3 7.3A3.7 3.7 0 1 1 7.7 2.2" fill="none" stroke="currentColor" stroke-width="1.7"/><path d="M10.3 0.3V4.6H6Z"/></svg></span></div>

</div>

<div id="hash">#</div><div id="count">5000+</div>
<div class="hline" style="left:281px;top:1006.5px;width:1607px"></div>

<!-- frame -->
<div class="edge" style="left:250px;top:1px;width:1668px;height:1px;background:#b6b6b6"></div>
<div class="edge" style="left:250px;top:1px;width:1.5px;height:1016px;background:#b4b4b4"></div>
<div class="edge" style="left:250px;top:0;width:1670px;height:1px"></div>
<div class="edge" style="left:1918px;top:0;width:2px;height:1019px;background:#050a18"></div>
<div class="edge" style="left:0;top:1017px;width:1920px;height:2px"></div>
</body>
</html>
